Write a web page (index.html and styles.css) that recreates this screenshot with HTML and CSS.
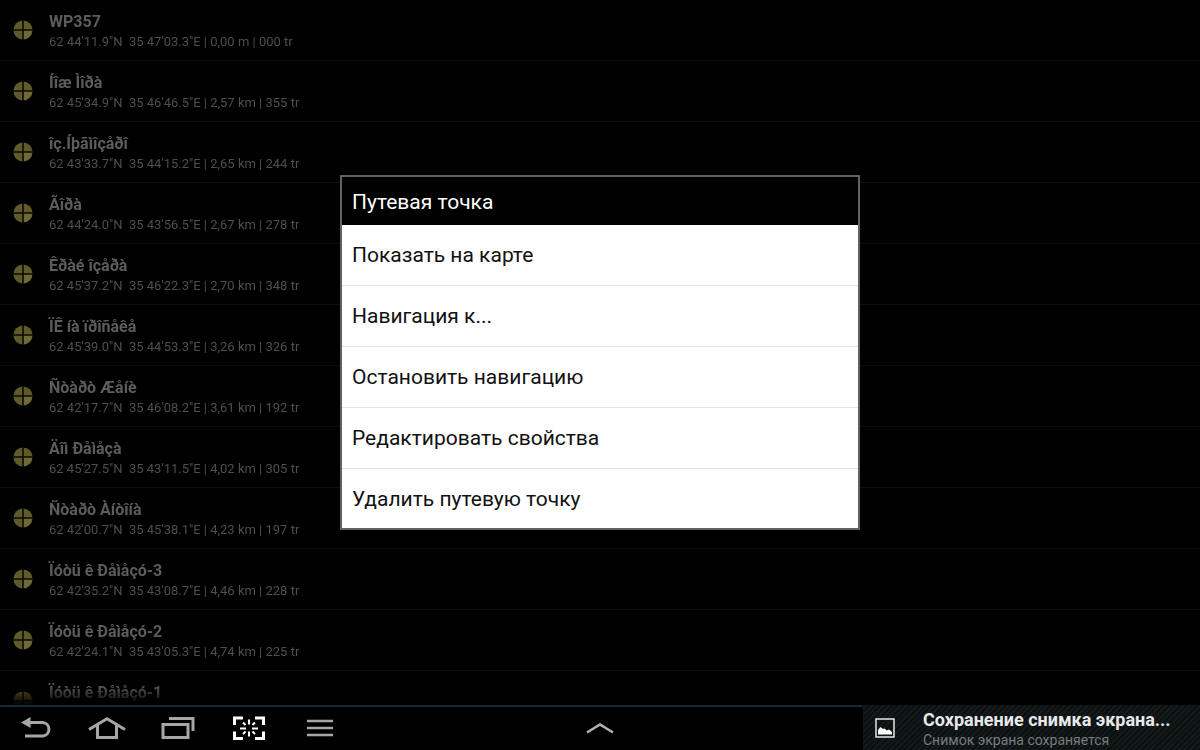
FILE: index.html
```html
<!DOCTYPE html>
<html lang="ru">
<head>
  <meta charset="UTF-8">
  <meta name="viewport" content="width=device-width, initial-scale=1">
  <title>Путевая точка</title>
  <link rel="stylesheet" href="styles.css">
</head>
<body>

  <svg class="sprite" aria-hidden="true">
    <symbol id="waypoint" viewBox="0 0 20 20">
      <circle cx="10" cy="10" r="9.6" fill="#5f5a2a"/>
      <path d="M10 10H19.2A9.2 9.2 0 0 1 10 19.2Z" fill="#6e6938"/>
      <path d="M10 0V20M0 10H20" stroke="#0c0b02" stroke-width="1.6"/>
    </symbol>
  </svg>

  <main class="screen">
    <ul class="waypoints">
      <li class="waypoint">
        <svg class="marker"><use href="#waypoint"/></svg>
        <div>
          <h2>WP357</h2>
          <p>62 44'11.9"N &nbsp;35 47'03.3"E | 0,00 m | 000 tr</p>
        </div>
      </li>
      <li class="waypoint">
        <svg class="marker"><use href="#waypoint"/></svg>
        <div>
          <h2>Íîæ Ìîðà</h2>
          <p>62 45'34.9"N &nbsp;35 46'46.5"E | 2,57 km | 355 tr</p>
        </div>
      </li>
      <li class="waypoint">
        <svg class="marker"><use href="#waypoint"/></svg>
        <div>
          <h2>îç.Íþãìîçåðî</h2>
          <p>62 43'33.7"N &nbsp;35 44'15.2"E | 2,65 km | 244 tr</p>
        </div>
      </li>
      <li class="waypoint">
        <svg class="marker"><use href="#waypoint"/></svg>
        <div>
          <h2>Ãîðà</h2>
          <p>62 44'24.0"N &nbsp;35 43'56.5"E | 2,67 km | 278 tr</p>
        </div>
      </li>
      <li class="waypoint">
        <svg class="marker"><use href="#waypoint"/></svg>
        <div>
          <h2>Êðàé îçåðà</h2>
          <p>62 45'37.2"N &nbsp;35 46'22.3"E | 2,70 km | 348 tr</p>
        </div>
      </li>
      <li class="waypoint">
        <svg class="marker"><use href="#waypoint"/></svg>
        <div>
          <h2>ÏÊ íà ïðîñåêå</h2>
          <p>62 45'39.0"N &nbsp;35 44'53.3"E | 3,26 km | 326 tr</p>
        </div>
      </li>
      <li class="waypoint">
        <svg class="marker"><use href="#waypoint"/></svg>
        <div>
          <h2>Ñòàðò Æåíè</h2>
          <p>62 42'17.7"N &nbsp;35 46'08.2"E | 3,61 km | 192 tr</p>
        </div>
      </li>
      <li class="waypoint">
        <svg class="marker"><use href="#waypoint"/></svg>
        <div>
          <h2>Äîì Ðåìåçà</h2>
          <p>62 45'27.5"N &nbsp;35 43'11.5"E | 4,02 km | 305 tr</p>
        </div>
      </li>
      <li class="waypoint">
        <svg class="marker"><use href="#waypoint"/></svg>
        <div>
          <h2>Ñòàðò Àíòîíà</h2>
          <p>62 42'00.7"N &nbsp;35 45'38.1"E | 4,23 km | 197 tr</p>
        </div>
      </li>
      <li class="waypoint">
        <svg class="marker"><use href="#waypoint"/></svg>
        <div>
          <h2>Ïóòü ê Ðåìåçó-3</h2>
          <p>62 42'35.2"N &nbsp;35 43'08.7"E | 4,46 km | 228 tr</p>
        </div>
      </li>
      <li class="waypoint">
        <svg class="marker"><use href="#waypoint"/></svg>
        <div>
          <h2>Ïóòü ê Ðåìåçó-2</h2>
          <p>62 42'24.1"N &nbsp;35 43'05.3"E | 4,74 km | 225 tr</p>
        </div>
      </li>
      <li class="waypoint">
        <svg class="marker"><use href="#waypoint"/></svg>
        <div>
          <h2>Ïóòü ê Ðåìåçó-1</h2>
        </div>
      </li>
    </ul>

    <div class="overlay">
      <div class="dialog" role="dialog" aria-labelledby="dialog-title">
        <h1 id="dialog-title">Путевая точка</h1>
        <button type="button">Показать на карте</button>
        <button type="button">Навигация к...</button>
        <button type="button">Остановить навигацию</button>
        <button type="button">Редактировать свойства</button>
        <button type="button">Удалить путевую точку</button>
      </div>
    </div>
  </main>

  <footer class="system-bar">
    <nav class="nav-buttons">
      <button type="button" aria-label="Назад">
        <svg width="32" height="24" viewBox="0 0 32 24" fill="none" stroke="#a6a6a6" stroke-width="3">
          <path d="M8 6.500H23A6.800 6.800 0 0 1 23 20H5"/>
          <path d="M1 6.500L10.500 1V12Z" fill="#a6a6a6" stroke="none"/>
        </svg>
      </button>
      <button type="button" aria-label="Домой">
        <svg width="38" height="24" viewBox="0 0 38 24" fill="none" stroke="#a6a6a6" stroke-width="3">
          <path d="M1 13.500L19 2.800L37 13.500"/>
          <path d="M9.500 9V21.500H28.500V9"/>
        </svg>
      </button>
      <button type="button" aria-label="Недавние приложения">
        <svg width="34" height="24" viewBox="0 0 34 24" fill="none" stroke="#a6a6a6" stroke-width="3">
          <path d="M2 8.500H27V21.500H2Z"/>
          <path d="M8 2.500H32V15"/>
        </svg>
      </button>
      <button type="button" aria-label="Снимок экрана">
        <svg width="32" height="24" viewBox="0 0 32 24" fill="none" stroke="#fff" stroke-width="3">
          <path d="M1.500 9V2H10M22 2H30.500V9M30.500 15.500V22.500H22M10 22.500H1.500V15.500"/>
          <path stroke-width="2" d="M16 3.500V8.500M16 15.500V20.500M7 12.500H13M19 12.500H25M10 6.500L12.500 9M22 6.500L19.500 9M10 18L12.500 15.500M22 18L19.500 15.500"/>
        </svg>
      </button>
      <button type="button" aria-label="Меню">
        <svg width="26" height="24" viewBox="0 0 26 24" stroke="#a6a6a6" stroke-width="2.500">
          <path d="M0 5H26M0 12H26M0 19H26"/>
        </svg>
      </button>
    </nav>

    <button class="expand" type="button" aria-label="Развернуть">
      <svg width="28" height="24" viewBox="0 0 28 24" fill="none" stroke="#b4b4b4" stroke-width="2.500">
        <path d="M1 16.500L14 8.500L27 16.500"/>
      </svg>
    </button>

    <div class="toast" role="status">
      <svg width="20" height="20" viewBox="0 0 20 20">
        <path d="M1 1H19V19H1Z" fill="none" stroke="#e6e6e6" stroke-width="1.500"/>
        <path d="M3 16.500V12L5.500 9L8 11L9.500 10.500L12 12.500L14 11.500L17 14V16.500Z" fill="#fff"/>
      </svg>
      <div>
        <strong>Сохранение снимка экрана...</strong>
        <p>Снимок экрана сохраняется</p>
      </div>
    </div>
  </footer>

</body>
</html>
```
FILE: styles.css
```css
* {
  box-sizing: border-box;
}

body {
  display: flex;
  flex-direction: column;
  height: 100vh;
  margin: 0;
  background-color: #000;
  color: #fff;
  font-family: Roboto, "Noto Sans", sans-serif;
  overflow: hidden;
}

h1, h2, p {
  margin: 0;
}

button {
  padding: 0;
  border: none;
  background: none;
  color: inherit;
  font-family: inherit;
  cursor: pointer;
}

svg {
  display: block;
  flex: none;
}

.sprite {
  position: absolute;
  width: 0;
  height: 0;
}

.screen {
  position: relative;
  flex: 1;
  min-height: 0;
  overflow: hidden;
}

/* Waypoint list */

.waypoints {
  height: 100%;
  margin: 0;
  padding: 0;
  list-style: none;
  overflow: hidden;
  -webkit-mask-image: linear-gradient(to top, transparent 0, #000 20px);
  mask-image: linear-gradient(to top, transparent 0, #000 20px);
}

.waypoint {
  display: flex;
  gap: 16px;
  height: 61px;
  padding: 12px 13px 0;
  border-bottom: 1px solid #0e0e0e;
}

.marker {
  width: 20px;
  height: 20px;
  margin-top: 8px;
}

.waypoint h2 {
  color: #5c5c5c;
  font-size: 16px;
  font-weight: bold;
  line-height: 20px;
}

.waypoint p {
  color: #4e4e4e;
  font-size: 13px;
  line-height: 20px;
}

/* Context menu */

.overlay {
  position: absolute;
  inset: 0;
  display: grid;
  place-items: center;
}

.dialog {
  display: flex;
  flex-direction: column;
  width: 520px;
  max-width: 100%;
  border: 2px solid #626262;
  background-color: #fff;
}

.dialog h1 {
  padding: 2px 10px 0;
  background-color: #000;
  font-size: 21px;
  font-weight: normal;
  line-height: 46px;
}

.dialog button {
  padding: 1px 10px 0;
  border-bottom: 1px solid #e2e2e2;
  color: #111;
  font-size: 21px;
  line-height: 59px;
  text-align: left;
}

.dialog button:last-child {
  border-bottom: none;
  line-height: 58px;
}

.dialog button:hover {
  background-color: #eee;
}

/* System bar */

.system-bar {
  display: grid;
  grid-template-columns: 1fr 80px 1fr;
  height: 45px;
  box-shadow: inset 0 2px #142a35;
}

.nav-buttons {
  display: flex;
}

.nav-buttons button,
.expand {
  display: grid;
  place-items: center;
  width: 71px;
}

.expand {
  width: 80px;
}

.toast {
  display: flex;
  gap: 28px;
  justify-self: end;
  width: 337px;
  padding: 5px 12px 0;
  background: repeating-linear-gradient(135deg, #0b1011 0 2px, #141a1c 2px 4px);
  white-space: nowrap;
  overflow: hidden;
}

.toast svg {
  margin-top: 8px;
}

.toast strong {
  display: block;
  color: #e8e8e8;
  font-size: 18px;
  line-height: 20px;
}

.toast p {
  color: #7a7a7a;
  font-size: 14px;
  line-height: 20px;
}
```
